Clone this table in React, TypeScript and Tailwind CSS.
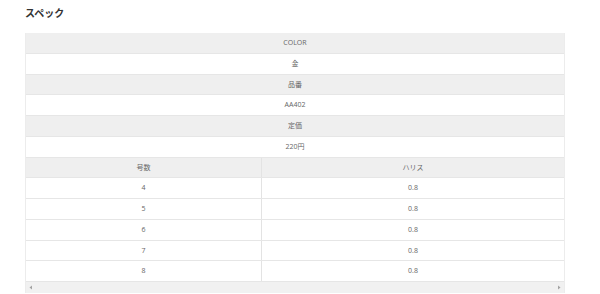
import React from "react";

const full = [
  { t: "COLOR", g: true },
  { t: "金", g: false },
  { t: "品番", g: true },
  { t: "AA402", g: false },
  { t: "定価", g: true },
  { t: "220円", g: false },
];

const rows = ["4", "5", "6", "7", "8"];

export default function App() {
  return (
    <div
      className="w-[600px] h-[294px] bg-white overflow-hidden"
      style={{ fontFamily: '"Open Sans", "Noto Sans CJK JP", sans-serif' }}
    >
      <div className="pl-[25px] pt-[6px] h-[33px] text-[10px] font-bold text-[#333]">スペック</div>
      <div className="ml-[25px] w-[540px] border-x border-[#ececec]">
        {full.map((r, i) => (
          <div
            key={i}
            className={`h-[20.75px] pt-px flex items-center justify-center text-[7px] text-[#666] border-b border-[#e6e6e6] ${r.g ? "bg-[#efefef]" : "bg-white"}`}
          >
            {r.t}
          </div>
        ))}
        <div className="grid grid-cols-[236px_1fr] h-[20.75px] bg-[#efefef] border-b border-[#e6e6e6] text-[7px] text-[#666]">
          <div className="flex items-center justify-center pt-px border-r border-[#e3e3e3]">号数</div>
          <div className="flex items-center justify-center pt-px">ハリス</div>
        </div>
        {rows.map((r) => (
          <div
            key={r}
            className="grid grid-cols-[236px_1fr] h-[20.75px] bg-white border-b border-[#e6e6e6] text-[7px] text-[#666]"
          >
            <div className="flex items-center justify-center pt-px border-r border-[#e3e3e3]">{r}</div>
            <div className="flex items-center justify-center pt-px">0.8</div>
          </div>
        ))}
        <div className="h-[11px] bg-[#f1f1f1] flex items-center justify-between px-[3px]">
          <svg width="4" height="5" viewBox="0 0 4 5"><path d="M3 0.5 L0.5 2.5 L3 4.5 Z" fill="#a3a3a3" /></svg>
          <svg width="4" height="5" viewBox="0 0 4 5"><path d="M1 0.5 L3.5 2.5 L1 4.5 Z" fill="#a3a3a3" /></svg>
        </div>
      </div>
    </div>
  );
}
